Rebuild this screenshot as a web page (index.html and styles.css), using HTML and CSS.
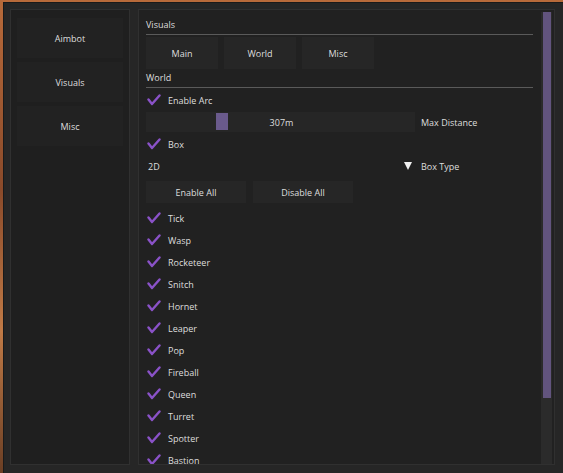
FILE: index.html
```html
<!DOCTYPE html>
<html lang="en">
<head>
    <meta charset="UTF-8">
    <title>Menu</title>
    <link rel="stylesheet" href="styles.css">
</head>
<body>
    <div class="window">
        <div class="sidebar">
            <div class="tab">Aimbot</div>
            <div class="tab">Visuals</div>
            <div class="tab">Misc</div>
        </div>

        <div class="panel">
            <div class="content">
                <div class="header">Visuals</div>
                <div class="sep"></div>
                <div class="subtabs">
                    <div class="btn sub">Main</div>
                    <div class="btn sub">World</div>
                    <div class="btn sub">Misc</div>
                </div>

                <div class="header">World</div>
                <div class="sep"></div>

                <div class="row check"><span class="tick"></span>Enable Arc</div>
                <div class="row">
                    <div class="frame slider">
                        <div class="grab"></div>
                        <span class="value">307m</span>
                    </div>
                    <span class="label">Max Distance</span>
                </div>
                <div class="row check"><span class="tick"></span>Box</div>
                <div class="row">
                    <div class="frame combo">
                        <span>2D</span>
                        <span class="arrow"></span>
                    </div>
                    <span class="label">Box Type</span>
                </div>
                <div class="row buttons">
                    <div class="btn wide">Enable All</div>
                    <div class="btn wide">Disable All</div>
                </div>

                <div id="list"></div>
            </div>
            <div class="scrollbar"><div class="thumb"></div></div>
        </div>
    </div>

    <script>
        const names = ['Tick', 'Wasp', 'Rocketeer', 'Snitch', 'Hornet', 'Leaper', 'Pop',
            'Fireball', 'Queen', 'Turret', 'Spotter', 'Bastion'];
        const list = document.getElementById('list');
        names.forEach(name => {
            const row = document.createElement('div');
            row.className = 'row check';
            row.innerHTML = `<span class="tick"></span>${name}`;
            list.appendChild(row);
        });

        // draw the check marks
        document.querySelectorAll('.tick').forEach(t => {
            t.innerHTML = '<svg width="14" height="12" viewBox="0 0 14 12"><polyline points="1.5,5.5 5,10 12.5,1.5" fill="none" stroke="#8a52c8" stroke-width="2.4" stroke-linecap="round" stroke-linejoin="round"/></svg>';
        });
    </script>
</body>
</html>
```

FILE: styles.css
```css
body {
    margin: 0;
    height: 473px;
    overflow: hidden;
    background: linear-gradient(180deg, #b86a3a 0%, #8a4a2a 40%, #c07a46 70%, #6a3e24 100%);
    font-family: "Open Sans", "Noto Sans", sans-serif;
    font-size: 9px;
    color: #dedede;
}
.window {
    margin: 2px 0 0 3px;
    height: 471px;
    box-sizing: border-box;
    background: #262626;
    border-top: 1px solid #1a1a1a;
    border-left: 1px solid #1a1a1a;
    padding: 6px 8px 8px 6px;
    display: flex;
    gap: 8px;
}
.sidebar {
    width: 120px;
    box-sizing: border-box;
    background: #1f1f1f;
    border: 1px solid #303030;
    padding: 8px 6px;
    display: flex;
    flex-direction: column;
    gap: 4px;
}
.tab {
    height: 40px;
    display: flex;
    align-items: center;
    justify-content: center;
    background: #222222;
}
.panel {
    flex: 1;
    background: #212121;
    border: 1px solid #303030;
    display: flex;
    overflow: hidden;
}
.content {
    flex: 1;
    padding: 7px 0 0 7px;
    overflow: hidden;
}
.header {
    height: 15px;
    line-height: 15px;
}
.sep {
    height: 1px;
    background: #5a5a5a;
    margin: 2px 0 1px 0;
}
.subtabs {
    display: flex;
    gap: 6px;
    margin: 2px 0 1px;
}
.btn {
    display: flex;
    align-items: center;
    justify-content: center;
    background: #262626;
}
.sub {
    width: 72px;
    height: 32px;
}
.row {
    height: 22px;
    display: flex;
    align-items: center;
}
.check .tick {
    width: 14px;
    height: 12px;
    margin: 0 7px 0 1px;
    display: flex;
}
.frame {
    width: 269px;
    height: 20px;
    box-sizing: border-box;
    background: #262626;
    display: flex;
    align-items: center;
    position: relative;
}
.slider {
    justify-content: center;
}
.grab {
    position: absolute;
    left: 70px;
    top: 1px;
    width: 12px;
    height: 17px;
    background: #6a5a8c;
}
.value {
    margin-left: 2px;
}
.combo {
    justify-content: space-between;
    padding: 0 3px 0 2px;
    background: #212121;
}
.arrow {
    width: 0;
    height: 0;
    border-left: 4px solid transparent;
    border-right: 4px solid transparent;
    border-top: 8px solid #f0f0f0;
}
.label {
    margin-left: 6px;
}
.buttons {
    height: 30px;
    gap: 7px;
}
.wide {
    width: 100px;
    height: 22px;
}
.scrollbar {
    width: 11px;
    margin: 2px 2px 0 8px;
    background: #2b2b2b;
    display: flex;
    justify-content: center;
}
.thumb {
    width: 8px;
    height: 386px;
    background: #62547e;
}
```
